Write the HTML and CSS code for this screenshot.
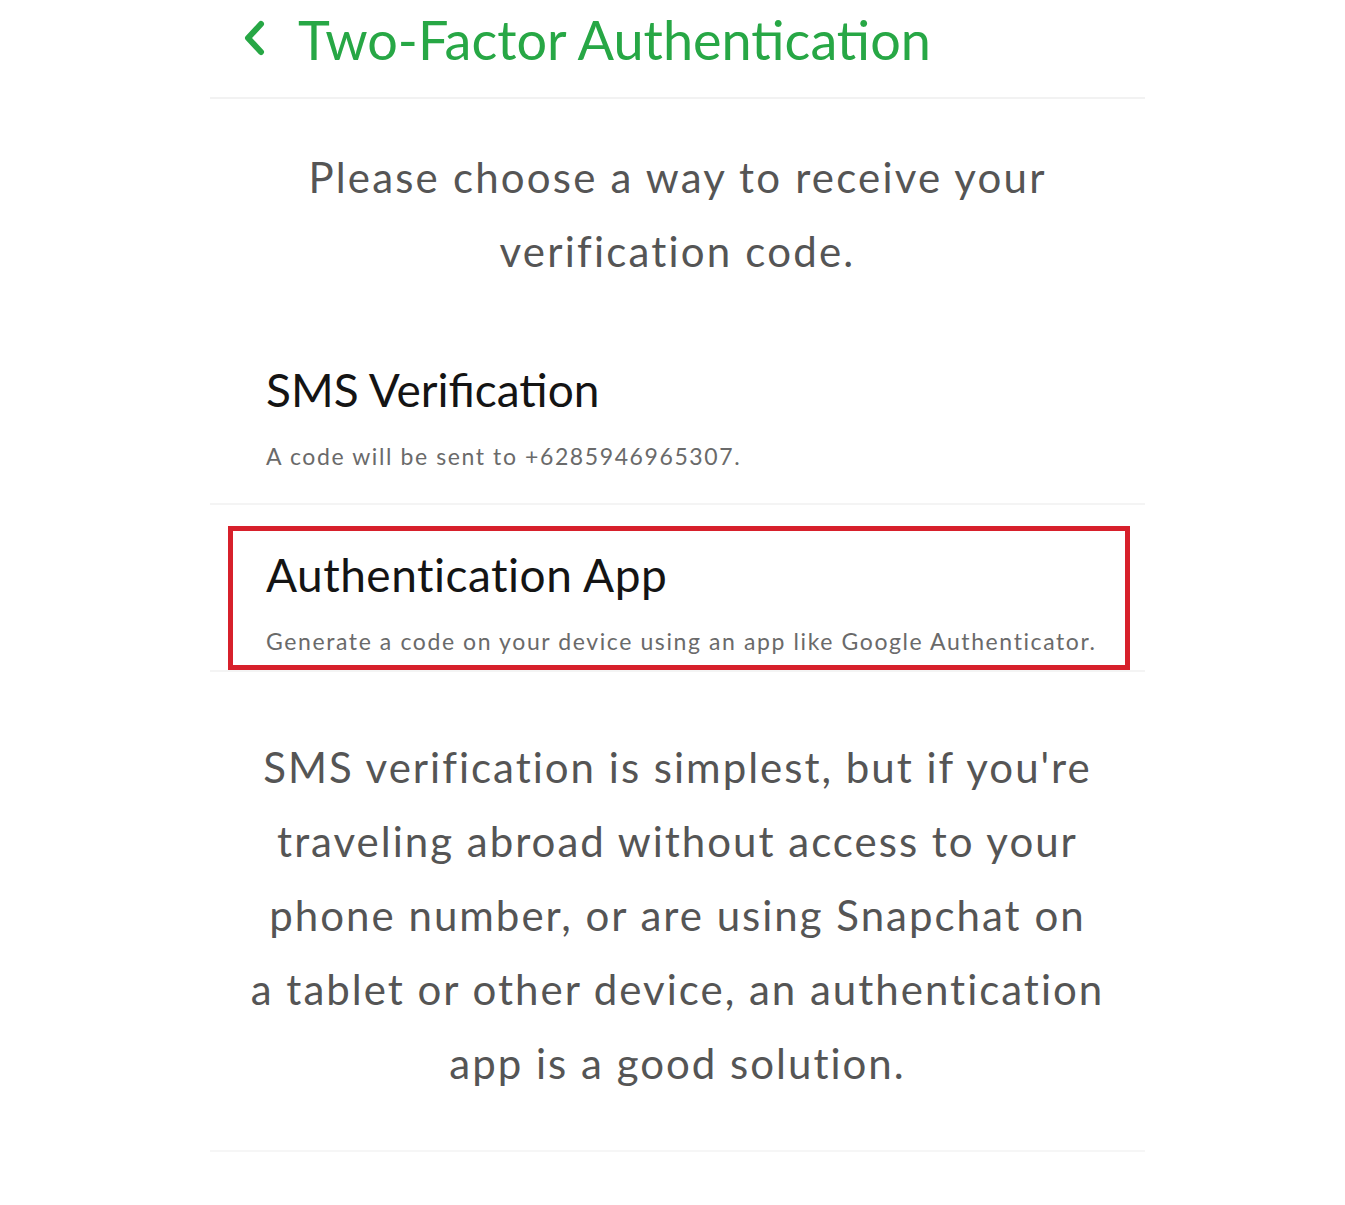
FILE: index.html
```html
<!DOCTYPE html>
<html lang="en">
<head>
<meta charset="utf-8">
<title>Two-Factor Authentication</title>
<link rel="stylesheet" href="styles.css">
</head>
<body>
<main class="screen">
  <header class="topbar">
    <span class="back" aria-label="Back">
      <svg width="24" height="36" viewBox="0 0 24 36"><path d="M19 4 L6 18 L19 32" fill="none" stroke="#27a745" stroke-width="6" stroke-linecap="round" stroke-linejoin="round"/></svg>
    </span>
    <h1 class="title">Two-Factor Authentication</h1>
  </header>
  <p class="intro">Please choose a way to receive your<br>verification code.</p>
  <section class="options">
    <div class="option">
      <div class="option-title">SMS Verification</div>
      <div class="option-desc">A code will be sent to +6285946965307.</div>
    </div>
    <div class="option option-selected">
      <div class="option-title option-title-wide">Authentication App</div>
      <div class="option-desc">Generate a code on your device using an app like Google Authenticator.</div>
    </div>
  </section>
  <p class="note">SMS verification is simplest, but if you're<br>traveling abroad without access to your<br>phone number, or are using Snapchat on<br>a tablet or other device, an authentication<br>app is a good solution.</p>
  <div class="bottom-line"></div>
</main>
</body>
</html>
```
FILE: styles.css
```css
html, body {
  margin: 0;
  padding: 0;
  background: #ffffff;
}
body {
  font-family: Lato, "Open Sans", "Liberation Sans", sans-serif;
  width: 1345px;
  height: 1205px;
  overflow: hidden;
}
.screen {
  width: 935px;
  margin-left: 210px;
}
.topbar {
  height: 97px;
  display: flex;
  align-items: flex-start;
  border-bottom: 2px solid #f2f2f2;
}
.back {
  width: 24px;
  height: 36px;
  margin-top: 20px;
  margin-left: 32px;
}
.back svg { display: block; }
.title {
  margin: 0 0 0 32px;
  font-weight: 400;
  font-size: 54px;
  line-height: 80px;
  color: #27a745;
  letter-spacing: 0;
}
.intro {
  margin: 0;
  padding-top: 41px;
  text-align: center;
  font-size: 42px;
  line-height: 74px;
  color: #555555;
  letter-spacing: 2.2px;
}
.options {
  margin-top: 74px;
}
.option {
  padding: 0 0 32px 56px;
  border-bottom: 2px solid #f4f4f4;
}
.option-selected {
  margin: 21px 15px 0 18px;
  padding: 16px 0 9px 33px;
  border: 5px solid #d7202b;
}
.option-title {
  font-size: 46px;
  line-height: 56px;
  color: #141414;
}
.option-title-wide {
  letter-spacing: 0.5px;
}
.option-desc {
  margin-top: 23px;
  font-size: 23px;
  line-height: 30px;
  color: #6a6a6a;
  letter-spacing: 1.6px;
}
.note {
  margin: 0;
  padding-top: 58px;
  border-top: 2px solid #f4f4f4;
  text-align: center;
  font-size: 42px;
  line-height: 74px;
  color: #555555;
  letter-spacing: 2px;
}
.bottom-line {
  margin-top: 50px;
  border-top: 2px solid #f6f6f6;
}
```
